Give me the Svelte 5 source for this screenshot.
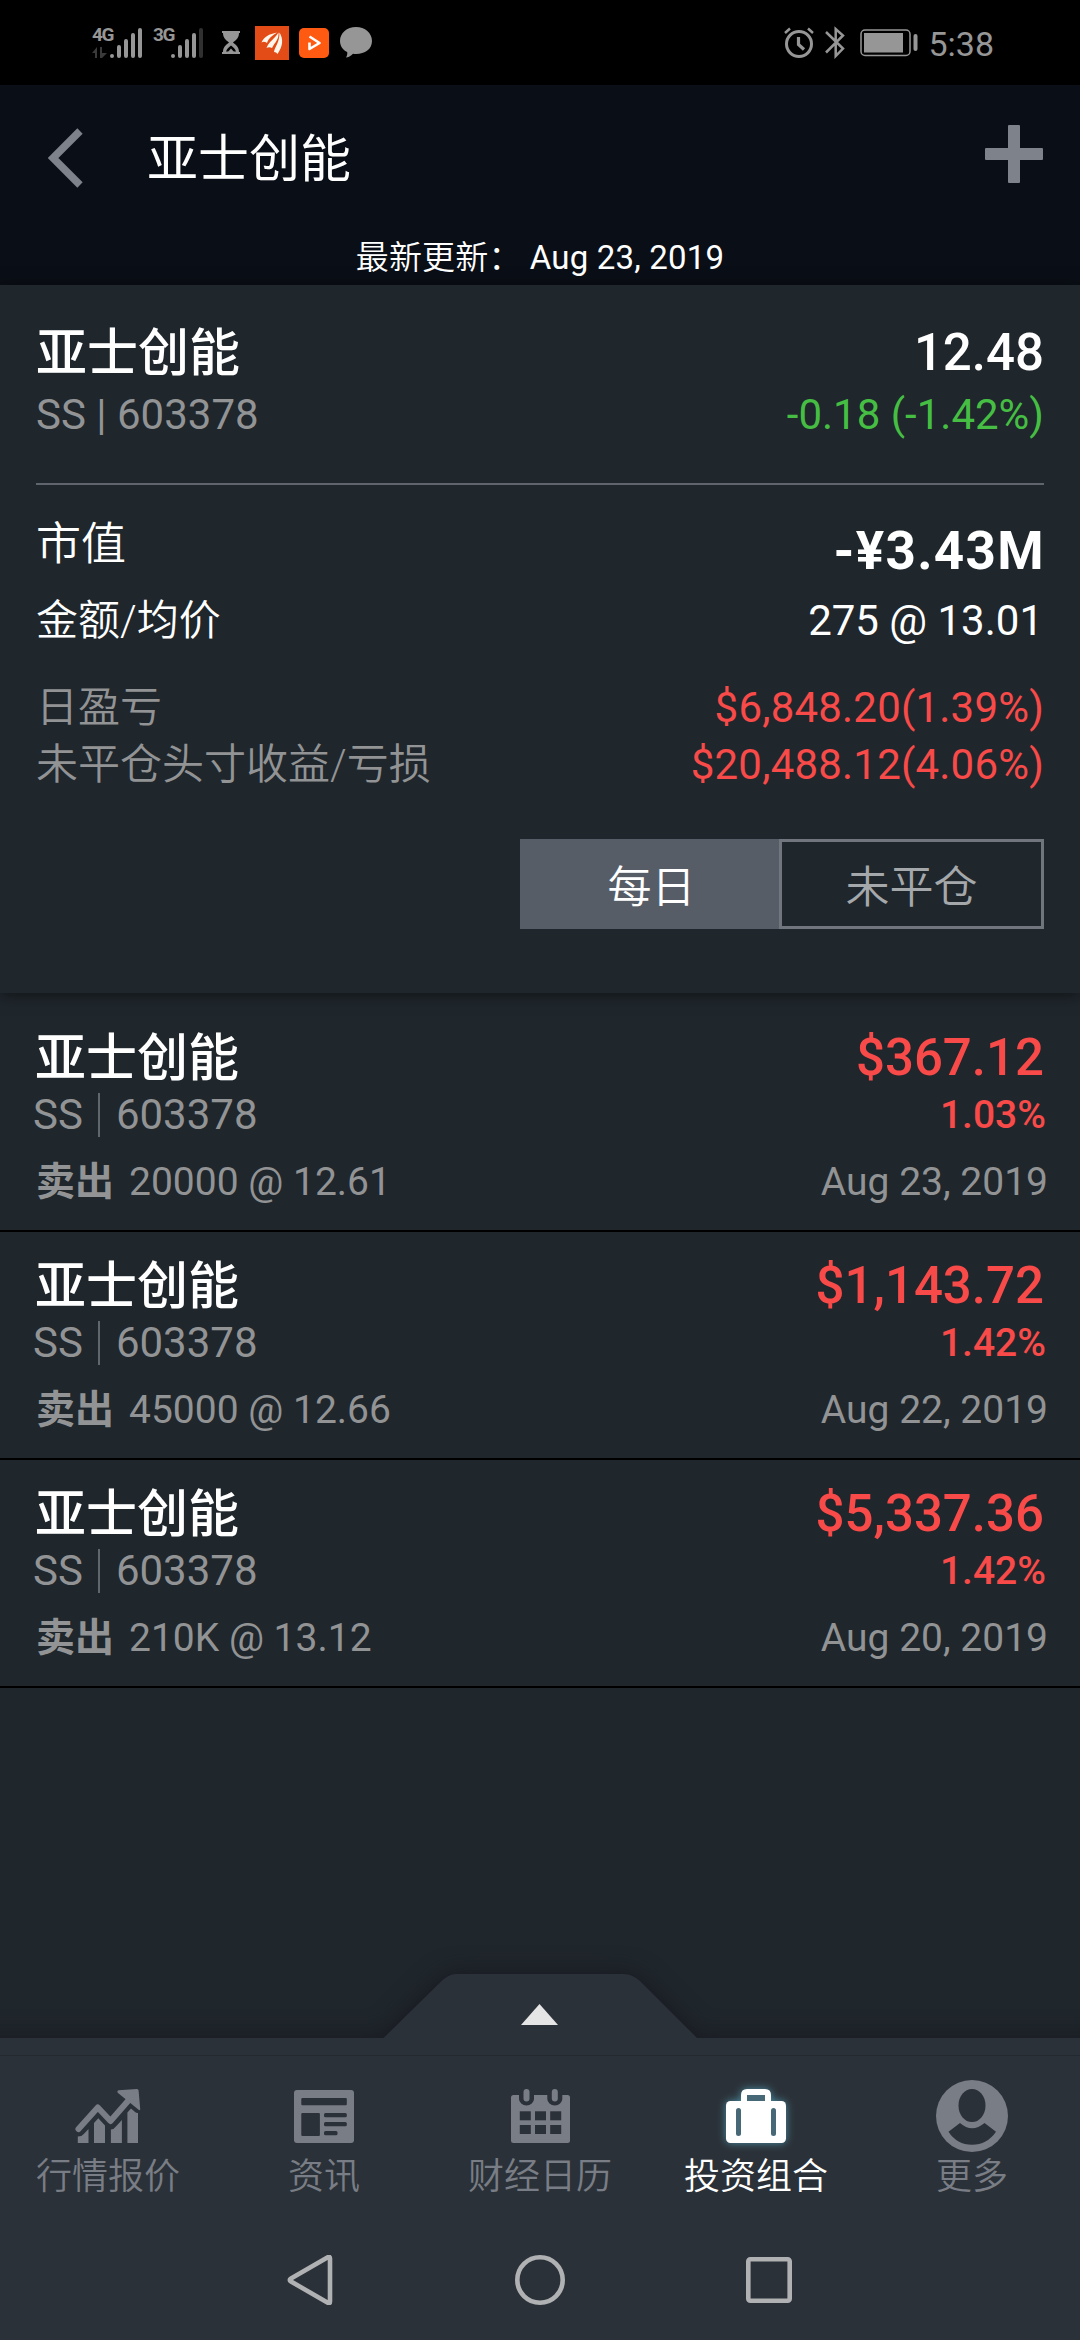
<script>
	let activeTab = 'portfolio';
	let range = 'daily';

	const name = '亚士创能';
	const code = '603378';

	const trades = [
		{ amount: '$367.12', percent: '1.03%', detail: '20000 @ 12.61', date: 'Aug 23, 2019' },
		{ amount: '$1,143.72', percent: '1.42%', detail: '45000 @ 12.66', date: 'Aug 22, 2019' },
		{ amount: '$5,337.36', percent: '1.42%', detail: '210K @ 13.12', date: 'Aug 20, 2019' }
	];

	const tabs = [
		{ id: 'quotes', label: '行情报价' },
		{ id: 'news', label: '资讯' },
		{ id: 'calendar', label: '财经日历' },
		{ id: 'portfolio', label: '投资组合' },
		{ id: 'more', label: '更多' }
	];

	// calendar day cells, [x, y]
	const cells = [];
	for (const y of [31.3, 45]) {
		for (const x of [15.8, 31, 46.2]) {
			cells.push([x, y]);
		}
	}
</script>

<div class="screen">
	<div class="status">
		<div class="network">
			<div class="net-type">
				<span>4G</span>
				<svg width="16" height="12" viewBox="0 0 16 12" fill="#3a3a3a">
					<path d="M0 6 5 0v11H3V6zM8 0h2v6h5l-5 5H8z" />
				</svg>
			</div>
			<svg class="signal" width="34" height="32" viewBox="0 0 34 32" stroke="#969696" stroke-width="4" stroke-linecap="round">
				<path d="M3 29v.1M10 20v9M17 14v15M24 8v21M31 3v26" />
			</svg>
		</div>
		<div class="network second">
			<div class="net-type"><span>3G</span></div>
			<svg class="signal" width="34" height="32" viewBox="0 0 34 32" stroke="#969696" stroke-width="4" stroke-linecap="round">
				<path d="M3 29v.1M10 20v9M17 14v15M24 8v21" />
				<path d="M31 3v26" stroke="#303030" />
			</svg>
		</div>
		<svg class="hourglass" width="18" height="23" viewBox="0 0 18 23" fill="#969696">
			<path d="M0 0h18v2h-1c0 5-3 7-6 9.500 3 2.500 6 4.500 6 9.500h1v2H0v-2h1c0-5 3-7 6-9.500C4 9 1 7 1 2H0z" />
			<path d="M9 14.500c2 1.500 4 3 5 6H4c1-3 3-4.500 5-6z" fill="#000" />
			<path d="M9 17.500l3 3.500H6z" />
		</svg>
		<svg class="app-a" width="34" height="34" viewBox="0 0 34 34">
			<rect width="34" height="34" fill="#e34c16" />
			<g fill="#fff6ec">
				<path d="M6.500 16.500C9 11 14 8 22 6.500 17 10 14 11.500 12 17q-3-2-5.500-.500z" />
				<path d="M11.500 22C14 15 19 14 23.500 6.500 24 14 20 16 17 22q-3-1.500-5.500 0z" />
				<path d="M19 26c1-6 5.500-9 5.500-19.500C28.500 13 28 20 22.500 28q-1-2-3.500-2z" />
			</g>
		</svg>
		<svg class="app-b" width="30" height="30" viewBox="0 0 30 30">
			<rect width="30" height="30" rx="5" fill="#ff5a12" />
			<path d="M10.500 8.500 20.500 15 10.500 21v-6.500" fill="none" stroke="#fff" stroke-width="2.600" stroke-linejoin="round" />
		</svg>
		<svg class="bubble" width="32" height="31" viewBox="0 0 32 31" fill="#969696">
			<path d="M16 0c9 0 16 6 16 14s-7 13-16 13c-1 0-2 0-3-.2C11 29 8 30.500 6 30.500c1-1.500 1.500-3.500 1.200-5.500C3 23 0 19 0 14 0 6 7 0 16 0z" />
		</svg>
		<div class="status-right">
			<svg width="30" height="32" viewBox="0 0 30 32" fill="none" stroke="#969696">
				<circle cx="15" cy="17" r="12.500" stroke-width="3" />
				<path d="M14.500 10v7.500l5.500 5" stroke-width="3.200" />
				<path d="M1 6l5-4.500M29 6l-5-4.500" stroke-width="2.500" />
			</svg>
			<svg class="bluetooth" width="20" height="33" viewBox="0 0 20 33" fill="none" stroke="#969696" stroke-width="2.500">
				<path d="M1 6l17 16.500L10.700 30V3L18 9.500 1 26.500" />
			</svg>
			<svg class="battery" width="58" height="28" viewBox="0 0 58 28">
				<rect x="1" y="1" width="49" height="25.500" rx="4" fill="none" stroke="#969696" stroke-width="1.500" />
				<rect x="4" y="4" width="39" height="19.500" fill="#969696" />
				<rect x="53.500" y="5" width="4" height="17" rx="2" fill="#969696" />
			</svg>
			<span class="clock">5:38</span>
		</div>
	</div>

	<header>
		<div class="title-row">
			<svg class="back" width="36" height="60" viewBox="0 0 36 60" fill="none" stroke="#7e828a" stroke-width="7.500">
				<path d="M32 3 5 30l27 27" />
			</svg>
			<h1>{name}</h1>
			<svg class="add" width="58" height="58" viewBox="0 0 58 58" fill="#7e838b">
				<rect y="23" width="58" height="12" rx="1" />
				<rect x="23" width="12" height="58" rx="1" />
			</svg>
		</div>
		<div class="updated"><span>最新更新：</span>Aug 23, 2019</div>
	</header>

	<section class="summary">
		<div class="row quote">
			<span class="name">{name}</span>
			<span class="price">12.48</span>
		</div>
		<div class="row change">
			<span class="muted">SS | {code}</span>
			<span class="down">-0.18 (-1.42%)</span>
		</div>
		<div class="divider"></div>
		<div class="row value">
			<span class="label value-label">市值</span>
			<span class="value-amount">-¥3.43M</span>
		</div>
		<div class="row cost">
			<span class="label">金额/均价</span>
			<span class="cost-amount">275 @ 13.01</span>
		</div>
		<div class="pnl">
			<div class="row">
				<span class="label muted">日盈亏</span>
				<span class="up">$6,848.20(1.39%)</span>
			</div>
			<div class="row">
				<span class="label muted">未平仓头寸收益/亏损</span>
				<span class="up">$20,488.12(4.06%)</span>
			</div>
		</div>
		<div class="switch">
			<button class:active={range === 'daily'} on:click={() => (range = 'daily')}>每日</button>
			<button class:active={range === 'open'} on:click={() => (range = 'open')}>未平仓</button>
		</div>
	</section>

	<main>
		{#each trades as trade}
			<article>
				<div class="row quote">
					<span class="name">{name}</span>
					<span class="price up">{trade.amount}</span>
				</div>
				<div class="row symbol">
					<span class="muted ticker">SS<i></i>{code}</span>
					<span class="percent up">{trade.percent}</span>
				</div>
				<div class="row detail muted">
					<span><b>卖出</b>{trade.detail}</span>
					<span class="date">{trade.date}</span>
				</div>
			</article>
		{/each}
	</main>

	<footer>
		<svg class="handle" width="1080" height="81" viewBox="0 0 1080 81">
			<path d="M-30 64H383.500L440 8.500Q448 0 456 0H624Q632 0 640 7L697 64H1110V81H-30z" fill="#2b3138" />
			<path d="M539.500 30 558 51H521z" fill="#e5e5e5" />
		</svg>
		<nav class="tabs">
			{#each tabs as tab}
				<button class:active={tab.id === activeTab} on:click={() => (activeTab = tab.id)}>
					<svg width="72" height="72" viewBox="0 0 72 72" fill="currentColor">
						{#if tab.id === 'quotes'}
							<path d="M6.500 49 25.800 27.500 38.500 41 59 17.500" fill="none" stroke="currentColor" stroke-width="6" stroke-linecap="round" stroke-linejoin="round" />
							<path d="M46.500 10.200 65 9q1.500 0 1.600 1.500L68.200 29q0 2-1.600.8L46 13q-1.500-2 .500-2.800z" />
							<path d="M5.800 63v-6.500q4 0 6-2.500l4.700-5V63zM22 63V43l4.300-4.800L33 45.500V63zM38.900 63V49.500q3 0 5-3l6-6.500v23zM55.400 63V32.500l3.600-4 3.500 3q1.500 1.500 3.500 1.500v30z" />
						{:else if tab.id === 'news'}
							<rect x="6" y="10" width="60" height="53" rx="3" />
							<g class="cut">
								<rect x="13.300" y="18" width="45.500" height="7.300" rx="1" />
								<rect x="13.300" y="33" width="18.600" height="23" rx="1" />
								<rect x="36" y="33" width="22.800" height="4.300" rx="1.500" />
								<rect x="36" y="42" width="22.800" height="4.300" rx="1.500" />
								<rect x="36" y="51" width="13.500" height="4.300" rx="1.500" />
							</g>
						{:else if tab.id === 'calendar'}
							<rect x="7" y="15" width="59" height="48" rx="2.500" />
							<g class="cut">
								<path d="M15 14h15v5a7.500 6.500 0 0 1-15 0zM43.300 14h15v5a7.500 6.500 0 0 1-15 0z" />
								{#each cells as [x, y]}
									<rect {x} {y} width="11" height="9" />
								{/each}
							</g>
							<rect x="19.500" y="9" width="6" height="12.500" rx="3" />
							<rect x="47.800" y="9" width="6" height="12.500" rx="3" />
						{:else if tab.id === 'portfolio'}
							<path d="M24 23V15q0-3 3-3h18q3 0 3 3v8" fill="none" stroke="currentColor" stroke-width="6" />
							<rect x="6" y="21" width="60" height="42" rx="4.500" />
							<g fill="#476877">
								<rect x="27" y="15" width="18" height="6" />
								<rect x="16" y="28" width="5" height="28" rx="2.500" />
								<rect x="51" y="28" width="5" height="28" rx="2.500" />
							</g>
						{:else}
							<circle cx="36" cy="36" r="36" />
							<g class="cut">
								<ellipse cx="36" cy="25.500" rx="13.500" ry="16.500" />
								<path d="M12.500 51.700 24 43q12 10.500 24.500 0l11.500 8.700Q51 64.700 36 64.700T12.500 51.700z" />
							</g>
						{/if}
					</svg>
					<span>{tab.label}</span>
				</button>
			{/each}
		</nav>
		<div class="system">
			<svg width="50" height="50" viewBox="0 0 50 50"><path d="M44 3.500q0-2.500-2.200-1.300L5 23.500q-2.500 1.500 0 3L41.800 47.800Q44 49 44 46.500z" /></svg>
			<svg width="50" height="50" viewBox="0 0 50 50"><circle cx="25" cy="25" r="22.700" /></svg>
			<svg width="50" height="50" viewBox="0 0 50 50"><rect x="4.300" y="4.300" width="41.400" height="41.400" rx="2" /></svg>
		</div>
	</footer>
</div>

<style>
	:global(body) {
		background: #000;
	}

	.screen {
		display: flex;
		flex-direction: column;
		width: 1080px;
		height: 2340px;
		overflow: hidden;
		background: #1f262c;
		color: #fff;
		font-family: Roboto, "Noto Sans CJK SC", sans-serif;
		font-size: 42px;
	}

	svg {
		display: block;
		flex: none;
	}

	button {
		padding: 0;
		border: 0;
		background: none;
		color: inherit;
		font: inherit;
	}

	.status {
		display: flex;
		align-items: center;
		box-sizing: border-box;
		height: 85px;
		padding: 0 86px 0 92px;
		background: #000;
		color: #969696;
	}

	.network {
		display: flex;
		height: 32px;
	}

	.network.second {
		margin-left: 10px;
	}

	.net-type {
		width: 17px;
		font-size: 19px;
		font-weight: 700;
		line-height: 15px;
		letter-spacing: -1.5px;
	}

	.net-type span {
		display: block;
		height: 20px;
	}

	.hourglass {
		margin-left: 18px;
	}

	.app-a {
		margin-left: 15px;
	}

	.app-b {
		margin-left: 10px;
	}

	.bubble {
		margin-left: 11px;
	}

	.status-right {
		display: flex;
		align-items: center;
		margin-left: auto;
	}

	.bluetooth {
		margin-left: 11px;
	}

	.battery {
		margin-left: 15px;
	}

	.clock {
		margin: 2px 0 0 10px;
		font-size: 34px;
		line-height: 40px;
	}

	header {
		height: 200px;
		background: #0a0e16;
	}

	.title-row {
		display: flex;
		align-items: center;
		box-sizing: border-box;
		height: 146px;
		padding: 0 37px 0 48px;
	}

	h1 {
		margin: 3px 0 0 63px;
		font-size: 51px;
		font-weight: 400;
		line-height: 60px;
	}

	.add {
		margin: 0 0 8px auto;
	}

	.updated {
		font-size: 33px;
		line-height: 54px;
		letter-spacing: 0.2px;
		text-align: center;
	}

	.updated span {
		margin-right: 8px;
		font-weight: 350;
	}

	.row {
		display: flex;
		justify-content: space-between;
		white-space: nowrap;
	}

	.label {
		font-weight: 350;
	}

	.muted {
		color: #929394;
	}

	.up {
		color: #f84a48;
	}

	.down {
		color: #45be43;
	}

	.summary {
		box-sizing: border-box;
		height: 708px;
		padding: 38px 36px 0;
		box-shadow: 0 2px 14px rgba(0, 0, 0, 0.5);
	}

	.quote {
		font-size: 51px;
		font-weight: 500;
		line-height: 60px;
	}

	.name {
		padding-top: 1px;
	}

	.quote {
		height: 60px;
	}

	.change {
		margin-top: 3px;
		line-height: 58px;
	}

	.divider {
		height: 2px;
		margin-top: 39px;
		background: #60656d;
	}

	.value {
		height: 66px;
		margin-top: 30px;
		line-height: 60px;
	}

	.value-label {
		font-size: 45px;
	}

	.value-amount {
		align-self: flex-end;
		margin-right: -1px;
		font-size: 53px;
		font-weight: 700;
		letter-spacing: 1.3px;
	}

	.cost {
		margin-top: 12px;
		line-height: 56px;
	}

	.cost-amount {
		margin-right: 1px;
	}

	.pnl {
		margin-top: 30px;
		line-height: 57px;
	}

	.pnl .up {
		letter-spacing: 0.2px;
	}

	.switch {
		display: flex;
		height: 90px;
		margin: 46px 0 0 484px;
	}

	.switch button {
		box-sizing: border-box;
		width: 265px;
		border: 3px solid #70757e;
		color: #a5a8aa;
		font-size: 44px;
		font-weight: 350;
	}

	.switch .active {
		width: 259px;
		padding-left: 4px;
		border-color: #575d67;
		background: #575d67;
		color: #fff;
	}

	main {
		flex: 1;
		padding-top: 11px;
	}

	article {
		box-sizing: border-box;
		height: 228px;
		padding: 24px 36px 0;
		border-bottom: 2px solid #000;
	}

	article .name {
		margin-left: -1px;
	}

	.symbol {
		line-height: 54px;
	}

	.ticker {
		display: flex;
		align-items: center;
		margin-left: -3px;
	}

	.ticker i {
		width: 2px;
		height: 44px;
		margin: 0 16px 0 15px;
		background: #62676d;
	}

	.percent {
		margin-right: -2px;
		font-size: 39px;
		font-weight: 500;
	}

	.detail {
		margin-top: 15px;
		font-size: 39px;
		line-height: 50px;
	}

	.detail b {
		margin-right: 15px;
	}

	.date {
		margin-right: -4px;
	}

	.handle {
		overflow: visible;
		filter: drop-shadow(0 0 12px rgba(20, 16, 24, 0.7));
	}

	.tabs {
		position: relative;
		display: flex;
		height: 140px;
		border-top: 1px solid #242930;
		background: #2b3138;
		color: #797d85;
	}

	.tabs button {
		display: flex;
		flex: 1;
		flex-direction: column;
		align-items: center;
		padding-top: 24px;
		font-size: 36px;
		font-weight: 350;
		line-height: 40px;
	}

	.tabs span {
		margin-top: 5px;
	}

	.tabs .active {
		color: #fff;
	}

	.tabs .active svg {
		filter: drop-shadow(0 0 4px #4a8fa5);
	}

	.cut {
		fill: #2b3138;
	}

	.system {
		position: relative;
		display: flex;
		justify-content: center;
		gap: 179px;
		height: 118px;
		padding-top: 26px;
		background: #2b3138;
	}

	.system svg {
		margin-top: 33px;
		fill: none;
		stroke: #b0b1b3;
		stroke-width: 4.6;
	}
</style>
